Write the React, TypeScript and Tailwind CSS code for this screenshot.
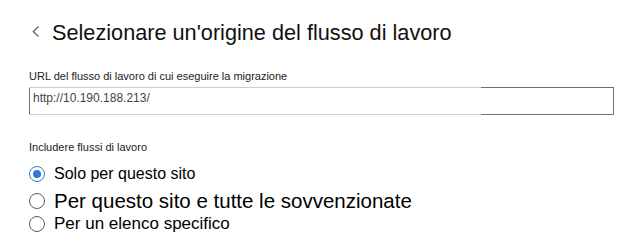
const options = [
  { label: 'Solo per questo sito', size: 'text-[16px] leading-[24px]', checked: true },
  { label: 'Per questo sito e tutte le sovvenzionate', size: 'text-[20.5px] leading-[29px]', checked: false },
  { label: 'Per un elenco specifico', size: 'text-[17px] leading-[17px]', checked: false },
];

const Radio = ({ checked }: { checked: boolean }) =>
  checked ? (
    <span className="flex size-4 shrink-0 items-center justify-center rounded-full border border-[#2f78d6] bg-white">
      <span className="size-[8px] rounded-full bg-[#2f78d6]" />
    </span>
  ) : (
    <span className="size-4 shrink-0 rounded-full border border-[#5a5a5a] bg-white" />
  );

export default function App() {
  return (
    <div className="min-h-[242px] w-[640px] bg-white pl-[29px] pr-[26px] pt-[19px] font-['Liberation_Sans',Arial,sans-serif] text-black">
      {/* Header */}
      <div className="flex items-start gap-3 h-[28px]">
        <svg width="8" height="11" viewBox="0 0 8 11" className="ml-[3px] mt-[7px] shrink-0" fill="none">
          <path d="M6.5 0.5 L1.2 5.5 L6.5 10.5" stroke="#555" strokeWidth="1.1" />
        </svg>
        <h1 className="text-[21.7px] leading-[28px] text-[#111]">Selezionare un'origine del flusso di lavoro</h1>
      </div>

      {/* URL */}
      <p className="mt-[22px] text-[11px] leading-[14px] text-[#222]">
        URL del flusso di lavoro di cui eseguire la migrazione
      </p>
      <div className="relative mt-[4px] h-[28px] border border-[#707070] px-[3px] pt-[2px] text-[12px] leading-4 text-[#444]">
        http://10.190.188.213/
        <span className="absolute left-[-1px] top-[-1px] h-px w-[452px] bg-[#cdcdcd]" />
        <span className="absolute bottom-[-1px] left-[-1px] h-px w-[452px] bg-[#cdcdcd]" />
      </div>

      {/* Options */}
      <p className="mt-[25px] text-[11px] leading-[14px] text-[#222]">Includere flussi di lavoro</p>
      <div className="mt-[8px] flex flex-col">
        {options.map((o) => (
          <label key={o.label} className={`flex items-center gap-[9px] ${o.size}`}>
            <Radio checked={o.checked} />
            <span>{o.label}</span>
          </label>
        ))}
      </div>
    </div>
  );
}
